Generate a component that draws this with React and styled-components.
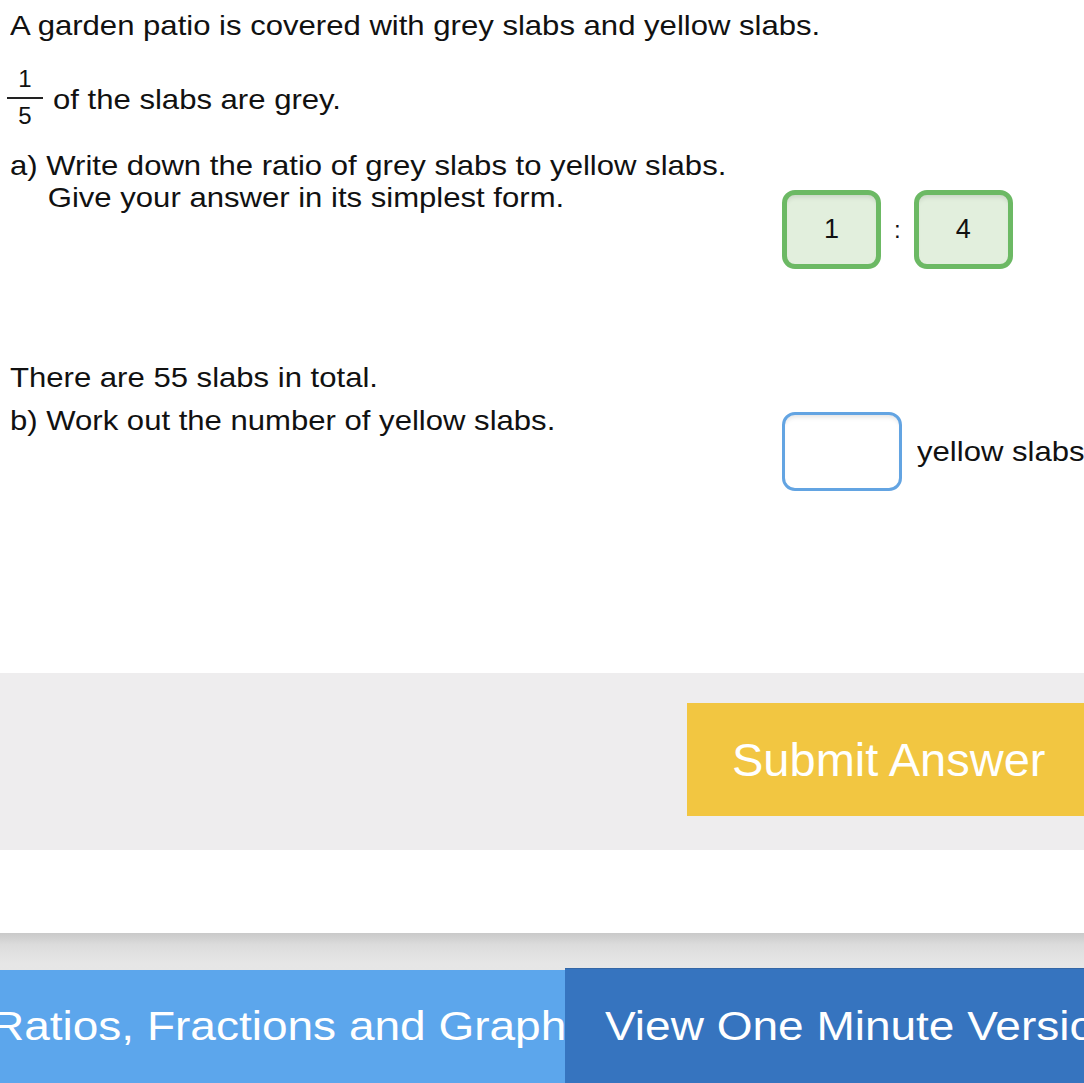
import React from "react";
import styled, { createGlobalStyle } from "styled-components";

const GlobalStyle = createGlobalStyle`
  html, body {
    margin: 0;
    padding: 0;
    background: #fff;
    overflow: hidden;
  }
  body {
    font-family: "Liberation Sans", Arial, sans-serif;
    color: #111;
  }
`;

export const Page = styled.div`
  width: 1084px;
  height: 1083px;
  overflow: hidden;
  display: flex;
  flex-direction: column;
`;

export const Question = styled.div`
  padding: 9px 0 0 10px;
  height: 664px;
  display: flex;
  flex-direction: column;
`;

// the source page is drawn a little wide, so text is stretched sideways
export const Line = styled.p`
  margin: 0;
  font-size: 28px;
  line-height: ${(p) => p.$lh || 34}px;
  white-space: nowrap;
  transform-origin: left center;
  transform: scaleX(1.11);
`;

export const FractionRow = styled.div`
  display: flex;
  align-items: center;
  gap: 10px;
  margin-top: 24px;
`;

export const FractionText = styled(Line)`
  margin-top: 5px;
`;

export const Fraction = styled.div`
  display: flex;
  flex-direction: column;
  align-items: center;
  width: 36px;
  font-size: 24px;
  line-height: 24px;
  margin-left: -3px;
`;

export const Bar = styled.div`
  width: 100%;
  height: 2px;
  background: #222;
  margin: 6px 0 5px;
`;

export const PartRow = styled.div`
  display: grid;
  grid-template-columns: 772px auto;
  align-items: start;
  margin-top: ${(p) => p.$top || 0}px;
`;

export const PartText = styled.div`
  display: flex;
  flex-direction: column;
  gap: ${(p) => p.$gap || 0}px;
`;

export const Indent = styled.span`
  display: inline-block;
  padding-left: 34px;
`;

export const Answer = styled.div`
  display: flex;
  align-items: center;
  gap: 13px;
  margin-top: ${(p) => p.$top || 0}px;
`;

export const Box = styled.div`
  box-sizing: border-box;
  width: ${(p) => p.$w || 99}px;
  height: 79px;
  border-radius: 13px;
  border: ${(p) => (p.$filled ? "5px solid #6cb964" : "3px solid #63a4e2")};
  background: ${(p) => (p.$filled ? "#e2efdd" : "#fff")};
  box-shadow: inset 0 5px 5px -3px rgba(0, 0, 0, 0.12);
  display: flex;
  align-items: center;
  justify-content: center;
  font-size: 27px;
  color: #111;
`;

export const Colon = styled.span`
  font-size: 24px;
`;

export const Unit = styled(Line)`
  margin-left: 2px;
`;

export const SubmitBar = styled.div`
  height: 177px;
  background: #eeedee;
  display: flex;
  align-items: flex-start;
  padding: 30px 0 0 687px;
  box-sizing: border-box;
`;

export const SubmitButton = styled.button`
  flex: none;
  width: 440px;
  height: 113px;
  border: none;
  border-radius: 0;
  background: #f2c641;
  color: #fff;
  font-family: "Liberation Sans", Arial, sans-serif;
  font-size: 47px;
  text-align: left;
  padding: 0 0 0 45px;
`;

export const Spacer = styled.div`
  height: 83px;
  background: #fff;
`;

export const Footer = styled.div`
  flex: 1;
  display: flex;
  flex-direction: column;
  background: linear-gradient(#c9c9c9 0px, #dcdcdc 12px, #e6e6e6 30px, #e8e8e8);
  padding-top: 35px;
`;

export const Tabs = styled.div`
  flex: 1;
  display: grid;
  grid-template-columns: 565px 1fr;
  align-items: stretch;
`;

export const Tab = styled.div`
  overflow: hidden;
  background: ${(p) => (p.$dark ? "#3674bf" : "#5ca6ec")};
  border-top: ${(p) => (p.$dark ? "1px solid #3467a6" : "none")};
  margin-top: ${(p) => (p.$dark ? "0" : "2px")};
  display: flex;
  align-items: center;
  justify-content: ${(p) => (p.$dark ? "flex-start" : "center")};
  padding-left: ${(p) => (p.$dark ? "40px" : "16px")};
  color: #fff;
  font-size: 40px;
  white-space: nowrap;
`;

export const TabLabel = styled.span`
  flex: none;
  display: inline-block;
  transform: scaleX(1.15);
  transform-origin: ${(p) => (p.$left ? "left center" : "center")};
`;

export default function App() {
  return (
    <>
      <GlobalStyle />
      <Page>
        <Question>
          <Line>A garden patio is covered with grey slabs and yellow slabs.</Line>
          <FractionRow>
            <Fraction>
              <span>1</span>
              <Bar />
              <span>5</span>
            </Fraction>
            <FractionText>of the slabs are grey.</FractionText>
          </FractionRow>
          <PartRow $top={22}>
            <PartText>
              <Line $lh={32}>a) Write down the ratio of grey slabs to yellow slabs.</Line>
              <Line $lh={32}>
                <Indent>Give your answer in its simplest form.</Indent>
              </Line>
            </PartText>
            <Answer $top={40}>
              <Box $filled>1</Box>
              <Colon>:</Colon>
              <Box $filled>4</Box>
            </Answer>
          </PartRow>
          <PartRow $top={92}>
            <PartText $gap={9}>
              <Line>There are 55 slabs in total.</Line>
              <Line>b) Work out the number of yellow slabs.</Line>
            </PartText>
            <Answer $top={51}>
              <Box $w={120} />
              <Unit>yellow slabs</Unit>
            </Answer>
          </PartRow>
        </Question>
        <SubmitBar>
          <SubmitButton>Submit Answer</SubmitButton>
        </SubmitBar>
        <Spacer />
        <Footer>
          <Tabs>
            <Tab>
              <TabLabel>Ratios, Fractions and Graphs</TabLabel>
            </Tab>
            <Tab $dark>
              <TabLabel $left>View One Minute Version</TabLabel>
            </Tab>
          </Tabs>
        </Footer>
      </Page>
    </>
  );
}
